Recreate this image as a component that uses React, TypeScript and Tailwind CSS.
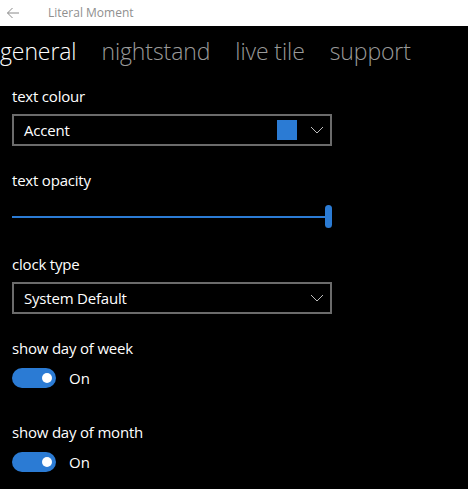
import { useState } from 'react';

const font = { fontFamily: '"Open Sans", "Noto Sans", sans-serif' };

function Chevron() {
    return (
        <svg width="14" height="8" viewBox="0 0 14 8" className="shrink-0">
            <path d="M1 1 L7 7 L13 1" fill="none" stroke="#bdbdbd" strokeWidth="1" />
        </svg>
    );
}

function Label({ text, className = '' }: { text: string; className?: string }) {
    return (
        <div className={`text-[15px] leading-[20px] tracking-[-0.2px] text-white ${className}`}>{text}</div>
    );
}

function ComboBox({ value, swatch }: { value: string; swatch?: boolean }) {
    return (
        <div className="mt-[8px] flex h-[32px] w-[320px] items-center border-2 border-[#6b6b6b] pl-[10px] pr-[6px]">
            <span className="flex-1 text-[15px] tracking-[-0.2px] text-white">{value}</span>
            {swatch && <div className="mr-[13px] h-[20px] w-[20px] bg-[#2b7bd4]" />}
            <Chevron />
        </div>
    );
}

function Toggle({ label, className = '' }: { label: string; className?: string }) {
    const [on, setOn] = useState(true);
    return (
        <div className={className}>
            <Label text={label} />
            <div className="mt-[10px] flex items-center">
                <button
                    onClick={() => setOn(!on)}
                    className="flex h-[20px] w-[44px] items-center justify-end rounded-full bg-[#2b7bd4] pr-[4px]"
                >
                    <span className="h-[10px] w-[10px] rounded-full bg-white" />
                </button>
                <span className="ml-[13px] text-[15px] leading-[20px] text-white">{on ? 'On' : 'Off'}</span>
            </div>
        </div>
    );
}

export default function App() {
    const tabs = ['general', 'nightstand', 'live tile', 'support'];

    return (
        <div className="h-[489px] w-[468px] overflow-hidden bg-black" style={font}>
            <div className="flex h-[26px] items-center bg-white">
                <svg width="14" height="12" viewBox="0 0 14 12" className="ml-[6px]">
                    <path d="M13 6 H1.5 M6.5 1 L1.5 6 L6.5 11" fill="none" stroke="#8a8a8a" strokeWidth="1" />
                </svg>
                <span className="ml-[28px] text-[12px] text-[#8f8f8f]">Literal Moment</span>
            </div>

            <div className="flex gap-[25px] pt-[9px] text-[23px] font-light leading-[32px] tracking-[-0.1px]">
                {tabs.map((t, i) => (
                    <span key={t} className={i === 0 ? 'text-white' : 'text-[#9a9a9a]'}>
                        {t}
                    </span>
                ))}
            </div>

            <div className="px-[12px] pt-[19px]">
                <Label text="text colour" />
                <ComboBox value="Accent" swatch />

                <Label text="text opacity" className="mt-[24px]" />
                <div className="mt-[15px] flex h-[23px] w-[320px] items-center">
                    <div className="h-[2px] flex-1 bg-[#2b7bd4]" />
                    <div className="h-[23px] w-[7px] rounded-full bg-[#2b7bd4]" />
                </div>

                <Label text="clock type" className="mt-[26px]" />
                <ComboBox value="System Default" />

                <Toggle label="show day of week" className="mt-[24px]" />
                <Toggle label="show day of month" className="mt-[34px]" />
            </div>
        </div>
    );
}
